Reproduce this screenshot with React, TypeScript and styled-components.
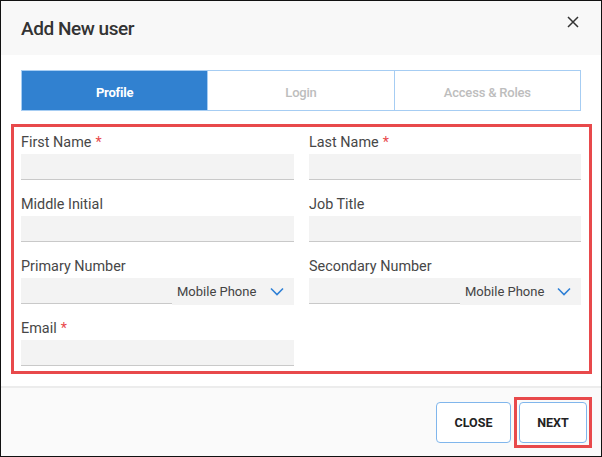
import React, { FC } from 'react'
import styled, { createGlobalStyle } from 'styled-components'

const GlobalStyle = createGlobalStyle`
  html, body {
    margin: 0;
    padding: 0;
    background: #fff;
  }
  * {
    box-sizing: border-box;
  }
`

const Frame = styled('div')`
  width: 602px;
  height: 457px;
  border: 1px solid #111;
  display: flex;
  flex-direction: column;
  background: #fff;
  font-family: Roboto, 'Liberation Sans', sans-serif;
  color: #444;
`

const Header = styled('header')`
  height: 54px;
  flex: none;
  display: flex;
  align-items: center;
  justify-content: space-between;
  padding: 0 22px 0 20px;
  background: #f8f8f8;
`

const Title = styled('h2')`
  margin: 0;
  font-size: 19px;
  letter-spacing: -0.45px;
  font-weight: 500;
  color: #333;
  padding-top: 1px;
`

const CloseIcon = styled('button')`
  border: 0 none;
  background: transparent;
  padding: 0;
  width: 12px;
  height: 12px;
  display: flex;
  margin-top: -12px;
  cursor: pointer;
`

const Body = styled('main')`
  flex: 1;
  display: flex;
  flex-direction: column;
`

const Tabs = styled('nav')`
  margin: 15px 20px 0 20px;
  height: 41px;
  display: flex;
  border: 1px solid #a6cdf3;
`

const Tab = styled('div')<{ $active?: boolean }>`
  flex: 1;
  display: flex;
  align-items: center;
  justify-content: center;
  padding-top: 3px;
  font-size: 13px;
  letter-spacing: -0.2px;
  font-weight: ${(p) => (p.$active ? 700 : 500)};
  color: ${(p) => (p.$active ? '#fff' : '#bdbdbd')};
  background: ${(p) => (p.$active ? '#3181d0' : '#fff')};
  & + & {
    border-left: 1px solid #a6cdf3;
  }
`

const FormBox = styled('form')`
  margin: 13px 9px 0 10px;
  border: 3px solid #e8494b;
  padding: 7px 8px 5px 7px;
  display: grid;
  grid-template-columns: 273px 272px;
  column-gap: 15px;
  row-gap: 16px;
`

const Field = styled('div')`
  display: flex;
  flex-direction: column;
`

const Label = styled('label')`
  font-size: 14.4px;
  line-height: 18px;
  height: 18px;
  margin-bottom: 2px;
  color: #474747;
`

const Req = styled('span')`
  color: #e8494b;
  margin-left: 4px;
`

const Input = styled('input')`
  height: 26px;
  width: 100%;
  border: 0 none;
  border-bottom: 1px solid #c9c9c9;
  background: #f3f3f3;
  padding: 0 6px;
  font-size: 13px;
  outline: none;
`

const PhoneRow = styled('div')`
  display: flex;
  height: 26px;
`

const PhoneInput = styled(Input)`
  width: 151px;
  flex: none;
`

const Select = styled('div')`
  flex: 1;
  display: flex;
  align-items: center;
  justify-content: space-between;
  padding: 0 10px 0 5px;
  background: #f3f3f3;
  font-size: 13px;
  color: #444;
  height: 27px;
`

const Footer = styled('footer')`
  height: 70px;
  flex: none;
  border-top: 2px solid #ececec;
  background: #fafafa;
  display: flex;
  align-items: center;
  justify-content: flex-end;
  gap: 3px;
  padding: 0 9px 0 0;
`

const FocusRing = styled('span')`
  display: flex;
  padding: 2px;
  border: 3px solid #e8494b;
`

const Button = styled('button')<{ $width: number }>`
  width: ${(p) => p.$width}px;
  height: 41px;
  border: 1px solid #80b6ec;
  border-radius: 4px;
  background: #fff;
  font-family: Roboto, 'Liberation Sans', sans-serif;
  font-size: 12.5px;
  font-weight: 700;
  color: #222;
  text-transform: uppercase;
  cursor: pointer;
`

const Chevron: FC = () => (
  <svg width="14" height="9" viewBox="0 0 14 9">
    <polyline points="1,1.5 7,7.5 13,1.5" fill="none" stroke="#2f80d6" strokeWidth="1.6" />
  </svg>
)

const PhoneField: FC<{ label: string }> = ({ label }) => (
  <Field>
    <Label>{label}</Label>
    <PhoneRow>
      <PhoneInput type="text" />
      <Select>
        <span>Mobile Phone</span>
        <Chevron />
      </Select>
    </PhoneRow>
  </Field>
)

const TextField: FC<{ label: string; required?: boolean }> = ({ label, required }) => (
  <Field>
    <Label>
      {label}
      {required && <Req>*</Req>}
    </Label>
    <Input type="text" />
  </Field>
)

export default function App() {
  return (
    <>
      <GlobalStyle />
      <Frame>
        <Header>
          <Title>Add New user</Title>
          <CloseIcon aria-label="close">
            <svg width="12" height="12" viewBox="0 0 12 12">
              <path d="M1 1 L11 11 M11 1 L1 11" stroke="#333" strokeWidth="1.5" />
            </svg>
          </CloseIcon>
        </Header>
        <Body>
          <Tabs>
            <Tab $active>Profile</Tab>
            <Tab>Login</Tab>
            <Tab>Access &amp; Roles</Tab>
          </Tabs>
          <FormBox>
            <TextField label="First Name" required />
            <TextField label="Last Name" required />
            <TextField label="Middle Initial" />
            <TextField label="Job Title" />
            <PhoneField label="Primary Number" />
            <PhoneField label="Secondary Number" />
            <TextField label="Email" required />
          </FormBox>
        </Body>
        <Footer>
          <Button $width={75}>Close</Button>
          <FocusRing>
            <Button $width={68}>Next</Button>
          </FocusRing>
        </Footer>
      </Frame>
    </>
  )
}
